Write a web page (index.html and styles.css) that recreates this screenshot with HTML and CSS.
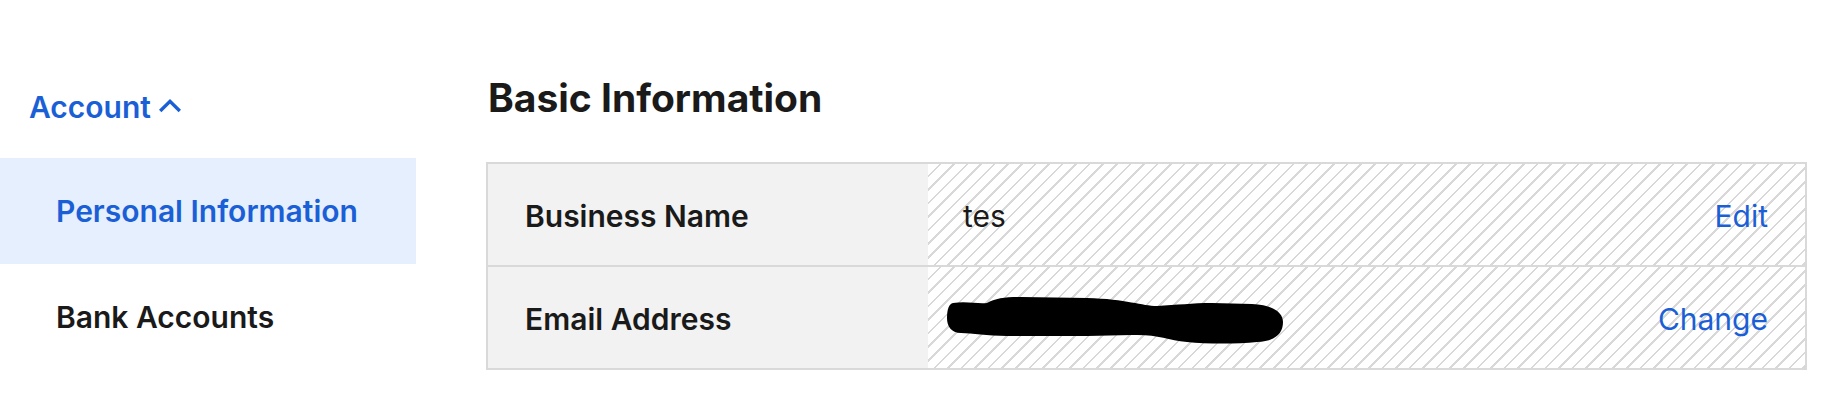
FILE: index.html
```html
<!DOCTYPE html>
<html lang="en">
<head>
<meta charset="utf-8">
<title>Account</title>
<link rel="stylesheet" href="styles.css">
</head>
<body>
<div class="layout">
  <nav class="sidebar">
    <div class="section-toggle">
      <span>Account</span>
      <svg class="chevron" width="24" height="14" viewBox="0 0 24 14" aria-hidden="true">
        <path d="M2.2 12 L12 2.4 L21.8 12" fill="none" stroke="currentColor" stroke-width="3.4" stroke-linejoin="miter"/>
      </svg>
    </div>
    <a class="nav-item active">Personal Information</a>
    <a class="nav-item">Bank Accounts</a>
  </nav>
  <main class="main">
    <h1 class="title">Basic Information</h1>
    <div class="info-table">
      <div class="info-row">
        <div class="info-label">Business Name</div>
        <div class="info-value">
          <span class="value-text">tes</span>
          <a class="action">Edit</a>
        </div>
      </div>
      <div class="info-row">
        <div class="info-label">Email Address</div>
        <div class="info-value">
          <svg class="redact" width="336" height="48" viewBox="0 0 336 48" aria-hidden="true">
            <path d="M6,7 C20,5 30,8 40,7 C48,2 60,1 75,1 L140,2 C180,3 195,10 210,10 C230,9 245,7 265,7 L305,8 C325,9 336,16 336,26 C336,38 328,45 310,46 C290,48 260,48 240,46 C220,44 210,38 185,39 L140,40 L60,40 C40,40 25,37 14,37 C4,37 0,30 0,22 C0,13 2,8 6,7 Z" fill="#000"/>
          </svg>
          <a class="action">Change</a>
        </div>
      </div>
    </div>
  </main>
</div>
</body>
</html>
```
FILE: styles.css
```css
html, body {
  margin: 0;
  padding: 0;
  background: #ffffff;
  overflow: hidden;
}

body {
  font-family: Inter, "Noto Sans", "DejaVu Sans", sans-serif;
  color: #1a1a1a;
}

.layout {
  display: flex;
  gap: 70px;
  padding-right: 25px;
}

.sidebar {
  width: 416px;
  flex: 0 0 416px;
  display: flex;
  flex-direction: column;
  padding-top: 84px;
}

.section-toggle {
  display: flex;
  align-items: center;
  gap: 7px;
  padding-left: 29px;
  height: 46px;
  margin-bottom: 28px;
  color: #1b5fd6;
  font-size: 30px;
  font-weight: 600;
}

.chevron {
  display: block;
  margin-top: -2px;
}

.nav-item {
  display: flex;
  align-items: center;
  height: 106px;
  padding-left: 56px;
  font-size: 30px;
  font-weight: 600;
  color: #1a1a1a;
  text-decoration: none;
}

.nav-item.active {
  background: #e5effd;
  color: #1b5fd6;
}

.main {
  flex: 1;
  min-width: 0;
  padding-top: 71px;
}

.title {
  margin: 0 0 37px 2px;
  font-size: 39px;
  font-weight: 700;
  line-height: 54px;
  color: #1a1a1a;
}

.info-table {
  border: 2px solid #d9d9d9;
}

.info-row {
  display: grid;
  grid-template-columns: 440px 1fr;
  height: 101px;
}

.info-row + .info-row {
  border-top: 2px solid #d9d9d9;
}

.info-label {
  display: flex;
  align-items: center;
  padding-left: 37px;
  padding-top: 2px;
  background: #f2f2f2;
  font-size: 30px;
  font-weight: 600;
  color: #1a1a1a;
}

.info-value {
  display: flex;
  align-items: center;
  justify-content: space-between;
  padding: 2px 37px 0 19px;
  background-color: #ffffff;
  background-image: repeating-linear-gradient(135deg, #ffffff 0px, #ffffff 7.8px, #d8d8d8 7.8px, #d8d8d8 9.6px);
  font-size: 30px;
}

.value-text {
  padding-left: 16px;
  font-weight: 400;
  color: #1a1a1a;
}

.redact {
  display: block;
  margin-top: 3px;
}

.action {
  color: #1b5fd6;
  font-weight: 400;
  text-decoration: none;
}
```
